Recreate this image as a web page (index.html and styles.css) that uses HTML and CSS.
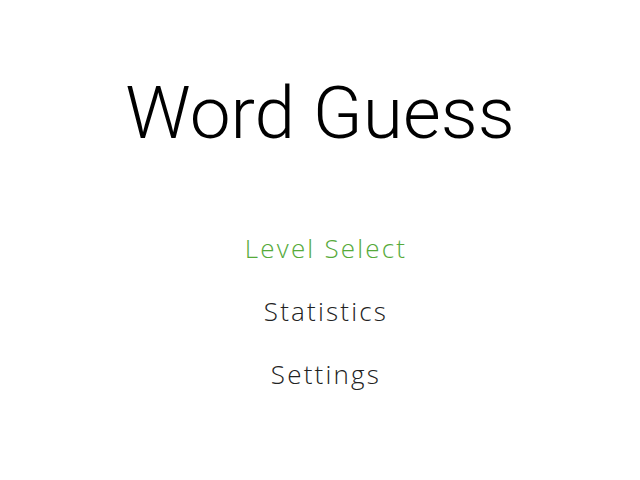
FILE: index.html
```html
<!DOCTYPE html>
<html lang="en">
<head>
  <meta charset="UTF-8" />
  <title>Word Guess</title>
  <link rel="stylesheet" href="styles.css">
</head>
<body>
  <div class="menu-screen">
    <h1 class="game-title">Word Guess</h1>
    <nav class="main-menu">
      <a class="menu-item active" href="#">Level Select</a>
      <a class="menu-item" href="#">Statistics</a>
      <a class="menu-item" href="#">Settings</a>
    </nav>
  </div>
</body>
</html>
```

FILE: styles.css
```css
* {
  box-sizing: border-box;
}

body {
  margin: 0;
  background: #fff;
  font-family: 'Open Sans', sans-serif;
}

.menu-screen {
  display: flex;
  flex-direction: column;
  align-items: center;
  height: 480px;
  padding-top: 70px;
}

.game-title {
  font-family: 'Roboto', sans-serif;
  font-weight: 300;
  font-size: 73px;
  line-height: 86px;
  margin: 0;
  color: #000;
}

.main-menu {
  display: flex;
  flex-direction: column;
  align-items: center;
  gap: 31px;
  margin-top: 76px;
  padding-left: 12px;
}

.menu-item {
  font-size: 26px;
  font-weight: 300;
  line-height: 32px;
  color: #222;
  text-decoration: none;
  letter-spacing: 2.2px;
}

.menu-item.active {
  color: #56aa3a;
}
```
